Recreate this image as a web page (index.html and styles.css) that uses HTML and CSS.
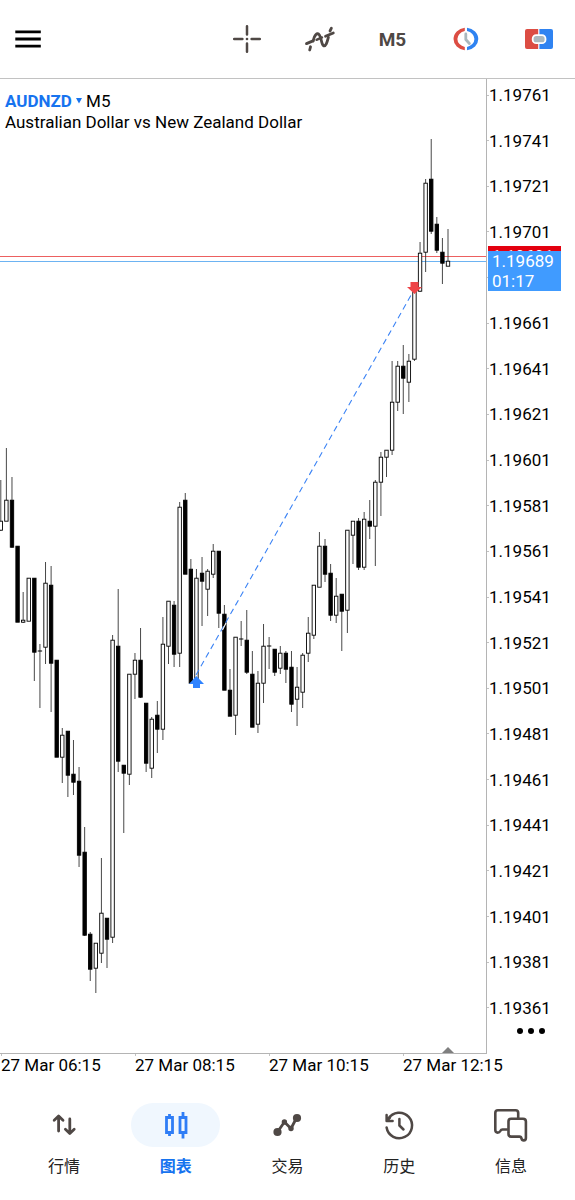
FILE: index.html
```html
<!doctype html>
<html lang="zh-CN">
	<head>
		<title>AUDNZD M5</title>
		<meta charset="utf-8" />
		<meta name="viewport" content="width=device-width, initial-scale=1" />
		<link rel="stylesheet" href="styles.css">
	</head>

	<body>

		<header class="toolbar">
			<button class="tool menu" type="button" aria-label="菜单">
				<svg width="28" height="20" viewBox="0 0 28 20"><path d="M1.3 2.8H26.8M1.3 10H26.8M1.3 17.2H26.8" stroke="#000" stroke-width="2.8"/></svg>
			</button>
			<div class="tools">
				<button class="tool" type="button" aria-label="十字线">
					<svg width="30" height="30" viewBox="0 0 30 30"><path d="M15 2.2V10.4M15 19.6V27.8M2.2 15H10.4M19.6 15H27.8" stroke="#4f4845" stroke-width="2.5" stroke-linecap="round"/><circle cx="15" cy="15" r="1.3" fill="#4f4845"/></svg>
				</button>
				<button class="tool" type="button" aria-label="指标">
					<svg width="32" height="30" viewBox="0 0 32 30" fill="none" stroke="#4f4845" stroke-width="2.8" stroke-linecap="round"><path d="M2.5 19.6L9 16.9M21.5 12.2L29.3 9"/><path d="M5.7 26L6.5 22.8M9.2 17C10.5 10.5 13.2 8 15.4 11C17.6 14 17.2 20.5 19.6 21.8C22 22.6 23 18.5 24.4 13.3M26 7L27.4 4.2"/><path d="M12.5 15.8L18 13.4" stroke-width="2.4"/></svg>
				</button>
				<button class="tool period" type="button">M5</button>
				<button class="tool" type="button" aria-label="时间周期">
					<svg width="30" height="24" viewBox="0 0 30 24"><path d="M13.8.8A13 11.3 0 0 0 13.8 23.2V20A9.500 8.200 0 0 1 13.800 4Z" fill="#dc4d43"/><path d="M16 .8A13 11.3 0 0 1 16 23.2V20A9.500 8.200 0 0 0 16 4Z" fill="#2f83f1"/><path d="M14.8 7V12.5L18.4 16.5" fill="none" stroke="#aab8be" stroke-width="2.8" stroke-linecap="round" stroke-linejoin="round"/></svg>
				</button>
				<button class="tool" type="button" aria-label="一键交易">
					<svg width="30" height="22" viewBox="0 0 30 22"><path d="M3 1H14.2V21H3Q1 21 1 19V3Q1 1 3 1Z" fill="#dc4d43"/><path d="M15.4 1H27Q29 1 29 3V19Q29 21 27 21H15.4Z" fill="#2f83f1"/><rect x="8.7" y="7.2" width="12.8" height="8" rx="3.5" fill="#aab8be" stroke="#fff" stroke-width="1.8"/></svg>
				</button>
			</div>
		</header>

		<main class="chart">
			<div class="plot">
				<svg id="candles" class="candles" viewBox="0 79 486 974" aria-label="AUDNZD M5"></svg>
			</div>
			<div class="axis">
				<ol class="prices">
					<li>1.19761</li>
					<li>1.19741</li>
					<li>1.19721</li>
					<li>1.19701</li>
					<li></li>
					<li>1.19661</li>
					<li>1.19641</li>
					<li>1.19621</li>
					<li>1.19601</li>
					<li>1.19581</li>
					<li>1.19561</li>
					<li>1.19541</li>
					<li>1.19521</li>
					<li>1.19501</li>
					<li>1.19481</li>
					<li>1.19461</li>
					<li>1.19441</li>
					<li>1.19421</li>
					<li>1.19401</li>
					<li>1.19381</li>
					<li>1.19361</li>
				</ol>
				<button class="more" type="button" aria-label="更多">
					<svg width="30" height="8" viewBox="0 0 30 8"><circle cx="4" cy="4" r="3"/><circle cx="15" cy="4" r="3"/><circle cx="26" cy="4" r="3"/></svg>
				</button>
			</div>
			<div class="symbol">
				<p><button class="pair" type="button">AUDNZD<svg width="6" height="6" viewBox="0 0 6 6"><path d="M0 0H6L3 5.6Z" fill="#1673ef"/></svg></button> M5</p>
				<p>Australian Dollar vs New Zealand Dollar</p>
			</div>
			<div class="quote">
				<div class="ask">1.19691</div>
				<div class="bid">1.19689<br>01:17</div>
			</div>
		</main>

		<div class="times">
			<span>27 Mar 06:15</span>
			<span>27 Mar 08:15</span>
			<span>27 Mar 10:15</span>
			<span>27 Mar 12:15</span>
		</div>

		<nav class="tabs">
			<a class="tab" href="#quotes">
				<span class="pill"><svg width="36" height="36" viewBox="0 0 36 36" fill="none" stroke="#4f4845" stroke-width="2.8" stroke-linecap="round" stroke-linejoin="round"><path d="M12.6 24V9.5M8.2 13.2L12.6 9L17 13.2M23.8 12V26.2M19.4 22.3L23.8 26.5L28.2 22.3"/></svg></span>
				行情
			</a>
			<a class="tab active" href="#chart">
				<span class="pill"><svg width="36" height="36" viewBox="0 0 36 36" fill="none" stroke="#2f7df6" stroke-width="2.8"><path d="M8.5 10.5H14.5V25.5H8.5ZM11.5 7V10.5M11.5 25.5V29M22 10.5H28V25.5H22ZM25 5V10.5M25 25.5V31.5"/></svg></span>
				图表
			</a>
			<a class="tab" href="#trade">
				<span class="pill"><svg width="36" height="36" viewBox="0 0 36 36" fill="none" stroke="#4f4845" stroke-width="2.8" stroke-linejoin="round"><path d="M8.5 25L15.4 15L22 21.5L27.5 11"/><g fill="#4f4845" stroke="none"><circle cx="8.5" cy="25" r="4.1"/><circle cx="15.4" cy="15" r="2.7"/><circle cx="22" cy="21.5" r="2.7"/><circle cx="28" cy="11" r="4.1"/></g></svg></span>
				交易
			</a>
			<a class="tab" href="#history">
				<span class="pill"><svg width="36" height="36" viewBox="0 0 36 36" fill="none" stroke="#4f4845" stroke-width="2.5" stroke-linecap="round" stroke-linejoin="round"><path d="M5.6 20.5A12.8 12.8 0 1 0 7.3 11.8M5.6 8V14H11.6M6 13.5L9 10.5"/><path d="M18.4 12V18.5L22.5 22.5"/></svg></span>
				历史
			</a>
			<a class="tab" href="#messages">
				<span class="pill"><svg width="36" height="36" viewBox="0 0 36 36" fill="none" stroke="#4f4845" stroke-width="2.6" stroke-linejoin="round"><path d="M14.8 22.5H9.5Q8 22.5 7.3 24Q6.5 25.6 4.6 25.6Q2.3 25.6 2.3 23V6Q2.3 3.3 5 3.3H22.5Q25.2 3.3 25.2 6V11.5"/><path d="M18.2 11.7H30Q32.9 11.7 32.9 14.6V31Q32.9 33.4 30.8 33.4Q28.8 33.4 28.5 31.5Q28.2 29.6 26.5 29.6H18.2Q15.5 29.6 15.5 27V14.4Q15.5 11.7 18.2 11.7Z"/></svg></span>
				信息
			</a>
		</nav>

		<script src="chart.js"></script>
	</body>
</html>
```
FILE: styles.css
```css
* {
	box-sizing: border-box;
}

body {
	margin: 0;
	background-color: white;
	color: black;
	font-family: Roboto, "Noto Sans CJK SC", sans-serif;
	font-size: 17px;
}

button {
	border: 0;
	padding: 0;
	background: none;
	font: inherit;
	color: inherit;
}

.toolbar {
	display: flex;
	justify-content: space-between;
	height: 78px;
}

.tools {
	display: flex;
}

.tool {
	display: flex;
	align-items: center;
	justify-content: center;
	width: 73px;
}

.menu {
	width: 56px;
}

.period {
	color: #4f4845;
	font-size: 19px;
	font-weight: 700;
}

.chart {
	position: relative;
	display: flex;
	border-top: 1px solid #c2c2c2;
}

.plot {
	flex: 1;
	border-bottom: 1px solid #b4b4b4;
}

.candles {
	display: block;
	width: 100%;
	height: auto;
}

.axis {
	display: flex;
	flex-direction: column;
	width: 89px;
	border-left: 1px solid #b4b4b4;
}

.prices {
	flex: 1;
	display: flex;
	flex-direction: column;
	justify-content: space-between;
	margin: 0;
	padding: 6px 0 0;
	list-style: none;
}

.prices li {
	display: flex;
	align-items: center;
	height: 20px;
	line-height: 20px;
}

.prices li::before {
	content: "";
	width: 2px;
	height: 1px;
	background-color: #c2c2c2;
}

.more {
	display: flex;
	align-items: center;
	justify-content: center;
	height: 26px;
	margin-bottom: 10px;
}

.symbol {
	position: absolute;
	top: 12px;
	left: 5px;
	line-height: 21px;
}

.symbol p {
	margin: 0;
}

.pair {
	color: #1673ef;
	font-weight: 700;
}

.pair svg {
	margin: 0 0 3px 4px;
}

/* the bid tag covers most of the ask tag */
.quote {
	position: absolute;
	top: 17.1%;
	right: 14px;
	width: 73px;
	color: white;
	line-height: 20px;
}

.ask {
	height: 5px;
	padding-left: 4px;
	overflow: hidden;
	background-color: #e3000f;
}

.bid {
	padding-left: 4px;
	background-color: #409bff;
}

.times {
	display: grid;
	grid-template-columns: repeat(4, 1fr);
	height: 32px;
	padding: 0 38px 0 1px;
	line-height: 22px;
	white-space: nowrap;
}

.times span {
	background: linear-gradient(#c2c2c2, #c2c2c2) no-repeat 0 0 / 1px 2px;
}

.tabs {
	display: flex;
	padding: 17px 8px 24px;
	font-size: 16px;
}

.tab {
	flex: 1;
	display: flex;
	flex-direction: column;
	align-items: center;
	gap: 8px;
	color: #222;
	line-height: 24px;
	text-decoration: none;
}

.pill {
	display: flex;
	align-items: center;
	justify-content: center;
	width: 89px;
	height: 44px;
	border-radius: 22px;
}

.active {
	color: #1673ef;
	font-weight: 700;
}

.active .pill {
	background-color: #f0f7fe;
}
```
FILE: chart.js
```js
// high, body top, body bottom, low, 1 = falling candle
var candles = [
	[480, 521, 530, 531, 0], [448, 500, 521, 521, 0], [477, 500, 547, 548, 1], [546, 546, 622, 622, 1],
	[592, 620, 622, 623, 0], [578, 578, 621, 621, 0], [578, 578, 652, 681, 1], [644, 651, 651, 708, 1],
	[562, 583, 647, 664, 0], [566, 585, 663, 712, 1], [660, 660, 757, 757, 1], [728, 735, 757, 783, 0],
	[731, 731, 775, 797, 1], [740, 774, 782, 795, 1], [767, 781, 855, 867, 1], [827, 852, 935, 936, 1],
	[932, 934, 969, 981, 1], [943, 943, 968, 993, 0], [858, 913, 953, 963, 0], [918, 918, 939, 968, 1],
	[635, 640, 937, 943, 0], [589, 646, 761, 772, 1], [765, 765, 773, 833, 1], [674, 674, 774, 785, 0],
	[653, 660, 674, 699, 0], [628, 660, 697, 698, 1], [703, 703, 763, 772, 1], [717, 719, 768, 778, 0],
	[701, 715, 729, 753, 1], [617, 644, 729, 740, 0], [601, 601, 646, 664, 0], [601, 605, 654, 667, 1],
	[502, 507, 653, 667, 0], [493, 500, 574, 574, 1], [559, 569, 683, 683, 1], [569, 578, 682, 682, 0],
	[557, 573, 581, 626, 1], [569, 571, 589, 616, 0], [544, 551, 574, 578, 0], [551, 551, 613, 628, 1],
	[605, 614, 690, 690, 1], [669, 690, 716, 716, 1], [637, 637, 715, 735, 0], [621, 639, 639, 646, 1],
	[610, 640, 672, 674, 1], [651, 674, 727, 727, 1], [671, 683, 724, 733, 0], [624, 646, 683, 703, 0],
	[637, 646, 646, 669, 1], [649, 649, 672, 676, 1], [646, 653, 668, 674, 0], [651, 653, 669, 683, 1],
	[651, 667, 704, 712, 1], [667, 687, 699, 726, 0], [653, 655, 692, 708, 0], [617, 633, 653, 662, 0],
	[585, 585, 635, 639, 0], [532, 546, 587, 587, 0], [539, 546, 574, 582, 1], [564, 573, 615, 621, 1],
	[578, 596, 615, 623, 0], [594, 594, 611, 651, 1], [530, 530, 610, 633, 0], [521, 521, 535, 564, 0],
	[518, 521, 567, 570, 1], [512, 519, 567, 570, 0], [500, 521, 526, 539, 1], [480, 482, 526, 566, 0],
	[452, 457, 482, 516, 0], [450, 450, 457, 477, 0], [361, 402, 450, 455, 0], [361, 366, 402, 411, 0],
	[345, 366, 378, 414, 1], [354, 361, 382, 402, 0], [288, 290, 359, 361, 0], [242, 253, 291, 292, 0],
	[179, 183, 252, 272, 0], [139, 179, 231, 234, 1], [217, 224, 250, 253, 1], [238, 252, 263, 284, 1],
	[229, 261, 266, 266, 0]
];

var svg = "";

// ask and bid lines
svg += "<path d='M0 256.5H486' stroke='#ec6060' stroke-width='1.2'/>";
svg += "<path d='M0 261.5H486' stroke='#6db3f2' stroke-width='1.2'/>";

for (var i = 0; i < candles.length; i++) {
	var c = candles[i];
	var x = 0.8 + i * 5.59;
	svg += "<path d='M" + x + " " + c[0] + "V" + c[3] + "' stroke='#333' stroke-width='0.9'/>";
	svg += "<rect x='" + (x - 1.7) + "' y='" + (c[1] + 0.2) + "' width='3.4' height='" + (c[2] - c[1]) + "' fill='" + (c[4] ? "#000" : "#fff") + "' stroke='#000' stroke-width='0.9'/>";
	// open equals close
	if (c[1] == c[2]) {
		svg += "<path d='M" + (x - 2.2) + " " + c[1] + "H" + (x + 2.2) + "' stroke='#000'/>";
	}
}

// deal line with its entry and exit arrows
svg += "<path d='M196 675L414 290' stroke='#3b83f5' stroke-width='1.1' stroke-dasharray='6 4'/>";
svg += "<path d='M222.5 630L226 623' stroke='#fff' stroke-width='1.1'/>";
svg += "<path d='M196.3 676L204 684H200V688H193V684H189Z' fill='#2f83ff'/>";
svg += "<path d='M414.5 294L422 287H418.5V282H410.500V287H407Z' fill='#ee4548'/>";

// current bar marker
svg += "<path d='M448 1047L454 1053H442Z' fill='#7f7f7f'/>";

document.getElementById("candles").innerHTML = svg;
```
